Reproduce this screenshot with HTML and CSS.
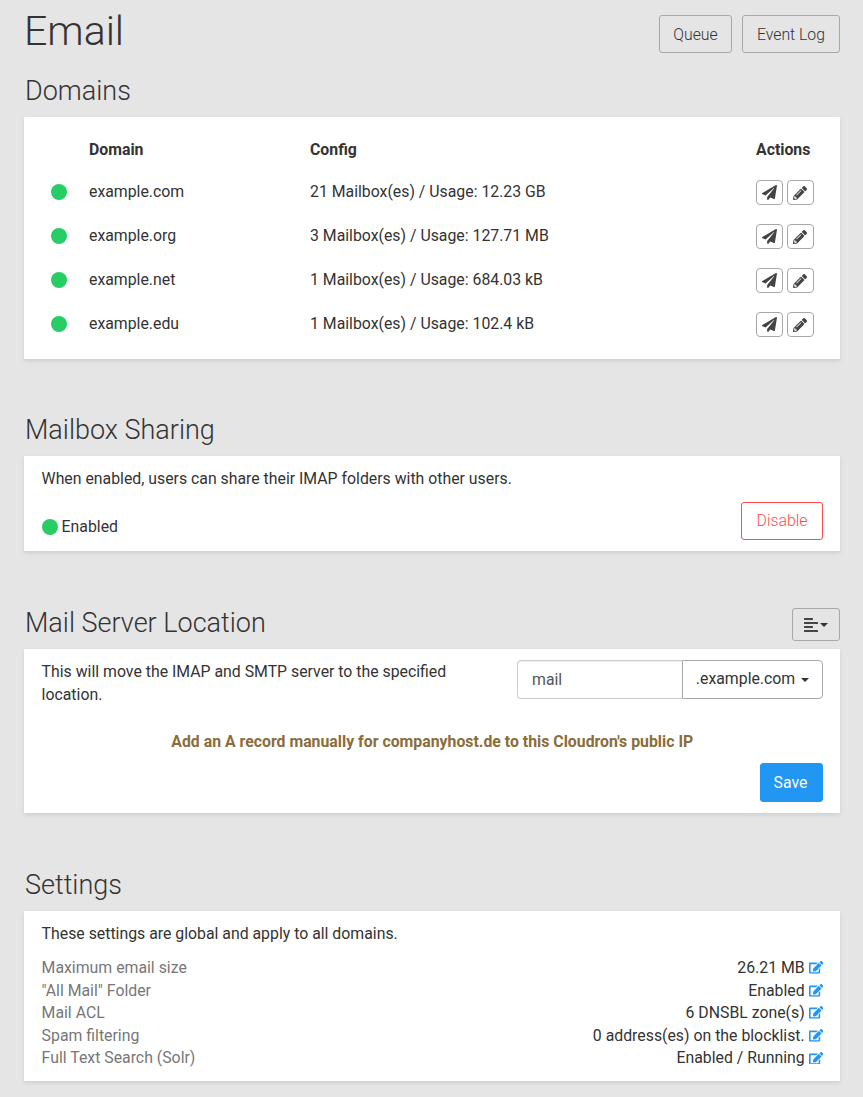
FILE: index.html
```html
<!DOCTYPE html>
<html>
<head>
    <meta charset="UTF-8">
    <title>Email</title>
    <link rel="stylesheet" href="styles.css">
</head>
<body>
    <svg class="icon-defs" width="0" height="0">
        <symbol id="i-plane" viewBox="0 0 512 512"><path d="M476 3.2L12.5 270.6c-18.1 10.4-15.8 35.6 2.2 43.2L121 358.4l287.3-253.2c5.5-4.9 13.3 2.6 8.6 8.3L176 407v80.5c0 23.6 28.5 32.9 42.5 15.8L282 426l124.6 52.2c14.2 6 30.4-2.9 33-18.2l72-432C515 7.8 493.3-6.8 476 3.2z"/></symbol>
        <symbol id="i-pencil" viewBox="0 0 512 512"><path d="M497.9 142.1l-46.1 46.1c-4.7 4.7-12.3 4.7-17 0l-111-111c-4.7-4.7-4.7-12.3 0-17l46.1-46.1c18.7-18.7 49.1-18.7 67.9 0l60.1 60.1c18.8 18.7 18.8 49.1 0 67.9zM284.2 99.8L21.6 362.4.4 483.9c-2.9 16.4 11.4 30.6 27.8 27.8l121.5-21.3 262.6-262.6c4.7-4.7 4.7-12.3 0-17l-111-111c-4.8-4.7-12.4-4.7-17.1 0zM124.1 339.9c-5.5-5.5-5.5-14.3 0-19.8l154-154c5.5-5.5 14.3-5.5 19.8 0s5.5 14.3 0 19.8l-154 154c-5.5 5.5-14.3 5.5-19.8 0zM88 424h48v36.3l-64.5 11.3-31.1-31.1L51.7 376H88v48z"/></symbol>
        <symbol id="i-edit" viewBox="0 0 576 512"><path d="M402.6 83.2l90.2 90.2c3.8 3.8 3.8 10 0 13.8L274.4 405.6l-92.8 10.3c-12.4 1.4-22.9-9.1-21.5-21.5l10.3-92.8L388.8 83.2c3.8-3.8 10-3.8 13.8 0zm162-22.9l-48.8-48.8c-15.2-15.2-39.9-15.2-55.2 0l-35.4 35.4c-3.8 3.8-3.8 10 0 13.8l90.2 90.2c3.8 3.8 10 3.8 13.8 0l35.4-35.4c15.2-15.3 15.2-40 0-55.2zM384 346.2V448H64V128h229.8c3.2 0 6.2-1.3 8.5-3.5l40-40c7.6-7.6 2.2-20.5-8.5-20.5H48C21.5 64 0 85.5 0 112v352c0 26.5 21.5 48 48 48h352c26.5 0 48-21.5 48-48V306.2c0-10.7-12.9-16-20.5-8.5l-40 40c-2.2 2.3-3.5 5.3-3.5 8.5z"/></symbol>
    </svg>

    <div class="content">
        <div class="page-header">
            <h1 class="title">Email</h1>
            <div class="header-btns">
                <button class="btn btn-queue">Queue</button>
                <button class="btn">Event Log</button>
            </div>
        </div>

        <!-- Domains -->
        <div class="section-header"><h2>Domains</h2></div>
        <div class="card card-domains">
            <table class="domains">
                <thead>
                    <tr>
                        <th class="col-status"></th>
                        <th class="col-domain">Domain</th>
                        <th class="col-config">Config</th>
                        <th class="col-actions">Actions</th>
                    </tr>
                </thead>
                <tbody>
                    <tr>
                        <td><span class="dot"></span></td>
                        <td>example.com</td>
                        <td>21 Mailbox(es) / Usage: 12.23 GB</td>
                        <td class="actions">
                            <button class="btn-xs"><svg class="ic-plane"><use href="#i-plane"/></svg></button>
                            <button class="btn-xs"><svg class="ic-pencil"><use href="#i-pencil"/></svg></button>
                        </td>
                    </tr>
                    <tr>
                        <td><span class="dot"></span></td>
                        <td>example.org</td>
                        <td>3 Mailbox(es) / Usage: 127.71 MB</td>
                        <td class="actions">
                            <button class="btn-xs"><svg class="ic-plane"><use href="#i-plane"/></svg></button>
                            <button class="btn-xs"><svg class="ic-pencil"><use href="#i-pencil"/></svg></button>
                        </td>
                    </tr>
                    <tr>
                        <td><span class="dot"></span></td>
                        <td>example.net</td>
                        <td>1 Mailbox(es) / Usage: 684.03 kB</td>
                        <td class="actions">
                            <button class="btn-xs"><svg class="ic-plane"><use href="#i-plane"/></svg></button>
                            <button class="btn-xs"><svg class="ic-pencil"><use href="#i-pencil"/></svg></button>
                        </td>
                    </tr>
                    <tr>
                        <td><span class="dot"></span></td>
                        <td>example.edu</td>
                        <td>1 Mailbox(es) / Usage: 102.4 kB</td>
                        <td class="actions">
                            <button class="btn-xs"><svg class="ic-plane"><use href="#i-plane"/></svg></button>
                            <button class="btn-xs"><svg class="ic-pencil"><use href="#i-pencil"/></svg></button>
                        </td>
                    </tr>
                </tbody>
            </table>
        </div>

        <!-- Mailbox Sharing -->
        <div class="section-header"><h2>Mailbox Sharing</h2></div>
        <div class="card card-sharing">
            <p class="card-text">When enabled, users can share their IMAP folders with other users.</p>
            <div class="sharing-row">
                <div class="status"><span class="dot"></span>Enabled</div>
                <button class="btn btn-danger">Disable</button>
            </div>
        </div>

        <!-- Mail Server Location -->
        <div class="section-header">
            <h2>Mail Server Location</h2>
            <button class="btn btn-menu">
                <svg class="ic-align" viewBox="0 0 448 512"><path d="M12.83 352h262.34A12.82 12.82 0 0 0 288 339.17v-38.34A12.82 12.82 0 0 0 275.17 288H12.83A12.82 12.82 0 0 0 0 300.83v38.34A12.82 12.82 0 0 0 12.83 352zm0-256h262.34A12.82 12.82 0 0 0 288 83.17V44.83A12.82 12.82 0 0 0 275.17 32H12.83A12.82 12.82 0 0 0 0 44.83v38.34A12.82 12.82 0 0 0 12.83 96zM432 160H16a16 16 0 0 0-16 16v32a16 16 0 0 0 16 16h416a16 16 0 0 0 16-16v-32a16 16 0 0 0-16-16zm0 256H16a16 16 0 0 0-16 16v32a16 16 0 0 0 16 16h416a16 16 0 0 0 16-16v-32a16 16 0 0 0-16-16z"/></svg><span class="caret"></span>
            </button>
        </div>
        <div class="card card-location">
            <div class="location-row">
                <p class="location-text">This will move the IMAP and SMTP server to the specified location.</p>
                <div class="input-group">
                    <input class="input" type="text" value="mail">
                    <button class="btn-domain">.example.com <span class="caret"></span></button>
                </div>
            </div>
            <p class="dns-note">Add an A record manually for companyhost.de to this Cloudron's public IP</p>
            <div class="save-row"><button class="btn btn-primary">Save</button></div>
        </div>

        <!-- Settings -->
        <div class="section-header"><h2>Settings</h2></div>
        <div class="card card-settings">
            <p class="card-text">These settings are global and apply to all domains.</p>
            <div class="settings">
                <div class="setting"><span class="label">Maximum email size</span><span class="value">26.21 MB <svg class="ic-edit"><use href="#i-edit"/></svg></span></div>
                <div class="setting"><span class="label">"All Mail" Folder</span><span class="value">Enabled <svg class="ic-edit"><use href="#i-edit"/></svg></span></div>
                <div class="setting"><span class="label">Mail ACL</span><span class="value">6 DNSBL zone(s) <svg class="ic-edit"><use href="#i-edit"/></svg></span></div>
                <div class="setting"><span class="label">Spam filtering</span><span class="value">0 address(es) on the blocklist. <svg class="ic-edit"><use href="#i-edit"/></svg></span></div>
                <div class="setting"><span class="label">Full Text Search (Solr)</span><span class="value">Enabled / Running <svg class="ic-edit"><use href="#i-edit"/></svg></span></div>
            </div>
        </div>
    </div>
</body>
</html>
```

FILE: styles.css
```css
* {
    box-sizing: border-box;
}

html, body {
    margin: 0;
    padding: 0;
}

body {
    font-family: Roboto, "Liberation Sans", sans-serif;
    font-size: 15.83px;
    line-height: 1.42857;
    color: #333;
    background: #e5e5e5;
    overflow: hidden;
    height: 1097px;
}

.icon-defs {
    position: absolute;
}

.content {
    padding: 0 23px 0 24px;
}

/* page header */
.page-header {
    display: flex;
    justify-content: space-between;
    align-items: flex-start;
    height: 74px;
}

.title {
    margin: 9px 0 0;
    font-size: 41px;
    line-height: 44px;
    font-weight: 300;
}

.header-btns {
    display: flex;
    gap: 10px;
    margin-top: 15px;
}

/* buttons */
.btn {
    font-family: inherit;
    font-size: 15.8px;
    font-weight: 300;
    height: 38px;
    padding: 0 14px;
    color: #333;
    background: transparent;
    border: 1px solid #a8a8a8;
    border-radius: 3px;
}

.btn-queue {
    width: 73px;
    padding: 0;
}

.btn-danger {
    width: 82px;
    color: #ff4c4c;
    border-color: #ff4c4c;
    background: #fff;
}

.btn-primary {
    width: 63px;
    height: 39px;
    padding: 0 2px 0 0;
    color: #fff;
    font-weight: 400;
    background: #2196f3;
    border-color: #2196f3;
}

.btn-menu {
    display: flex;
    align-items: center;
    justify-content: center;
    width: 48px;
    height: 33px;
    margin-top: 2px;
    padding: 0;
}

.btn-xs {
    display: inline-flex;
    align-items: center;
    justify-content: center;
    width: 27px;
    height: 25px;
    margin-top: 2px;
    padding: 0;
    background: #fff;
    border: 1px solid #a8a8a8;
    border-radius: 4px;
    fill: #444;
}

.ic-plane {
    width: 15px;
    height: 15px;
}

.ic-pencil {
    width: 14px;
    height: 14px;
}

.ic-align {
    width: 14px;
    height: 16px;
    fill: #444;
}

.ic-edit {
    width: 14.4px;
    height: 12.8px;
    fill: #2196f3;
    vertical-align: -1px;
}

.caret {
    display: inline-block;
    margin-left: 2px;
    vertical-align: middle;
    border-top: 4px solid #333;
    border-left: 4px solid transparent;
    border-right: 4px solid transparent;
}

/* sections */
.section-header {
    display: flex;
    justify-content: space-between;
    align-items: flex-start;
    height: 43px;
}

.section-header h2 {
    margin: 1px 0 0 1px;
    font-size: 27px;
    line-height: 32px;
    font-weight: 300;
}

.card {
    background: #fff;
    box-shadow: 0 2px 4px rgba(0, 0, 0, 0.1);
    margin-bottom: 55px;
}

.card-text {
    margin: 0;
}

/* domains */
.card-domains {
    height: 242px;
    padding: 11px 26px 0 0;
    margin-bottom: 54px;
}

.domains {
    width: 100%;
    table-layout: fixed;
    border-collapse: collapse;
}

.domains th {
    height: 42px;
    padding: 2px 0 0;
    text-align: left;
    font-weight: 700;
}

.domains td {
    height: 44px;
    padding: 0;
}

.col-status {
    width: 65px;
}

.col-domain {
    width: 221px;
}

.col-actions {
    width: 58px;
}

.domains td:first-child {
    padding-left: 26.5px;
}

.domains .dot {
    display: block;
}

.actions {
    white-space: nowrap;
}

.dot {
    display: inline-block;
    width: 16px;
    height: 16px;
    border-radius: 50%;
    background: #27ce65;
}

/* sharing */
.card-sharing {
    height: 95px;
    padding: 12px 17px 0 17.6px;
}

.sharing-row {
    display: flex;
    justify-content: space-between;
    margin-top: 11px;
}

.status {
    display: flex;
    align-items: center;
    gap: 4px;
    height: 51px;
}

/* location */
.card-location {
    height: 164px;
    padding: 11px 17px 0 17.6px;
}

.location-row {
    display: flex;
    justify-content: space-between;
}

.location-text {
    width: 440px;
    margin: 1px 0 0;
}

.input-group {
    display: flex;
    height: 39px;
}

.input {
    width: 165px;
    height: 39px;
    padding: 0 14px;
    font: inherit;
    color: #555;
    border: 1px solid #ccc;
    border-right: 0;
    border-radius: 4px 0 0 4px;
    box-shadow: inset 0 1px 1px rgba(0, 0, 0, 0.075);
}

.btn-domain {
    width: 141px;
    padding: 0;
    font: inherit;
    color: #333;
    background: #fff;
    border: 1px solid #a8a8a8;
    border-radius: 0 4px 4px 0;
}

.dns-note {
    margin: 25px 0 0;
    text-align: center;
    font-weight: 700;
    color: #8a6d3b;
}

.save-row {
    display: flex;
    justify-content: flex-end;
    margin-top: 9px;
}

/* settings */
.card-settings {
    height: 170px;
    padding: 12px 17px 0 17.6px;
    margin-bottom: 0;
}

.settings {
    margin-top: 11.4px;
}

.setting {
    display: flex;
    justify-content: space-between;
}

.label {
    color: #777;
}
```
